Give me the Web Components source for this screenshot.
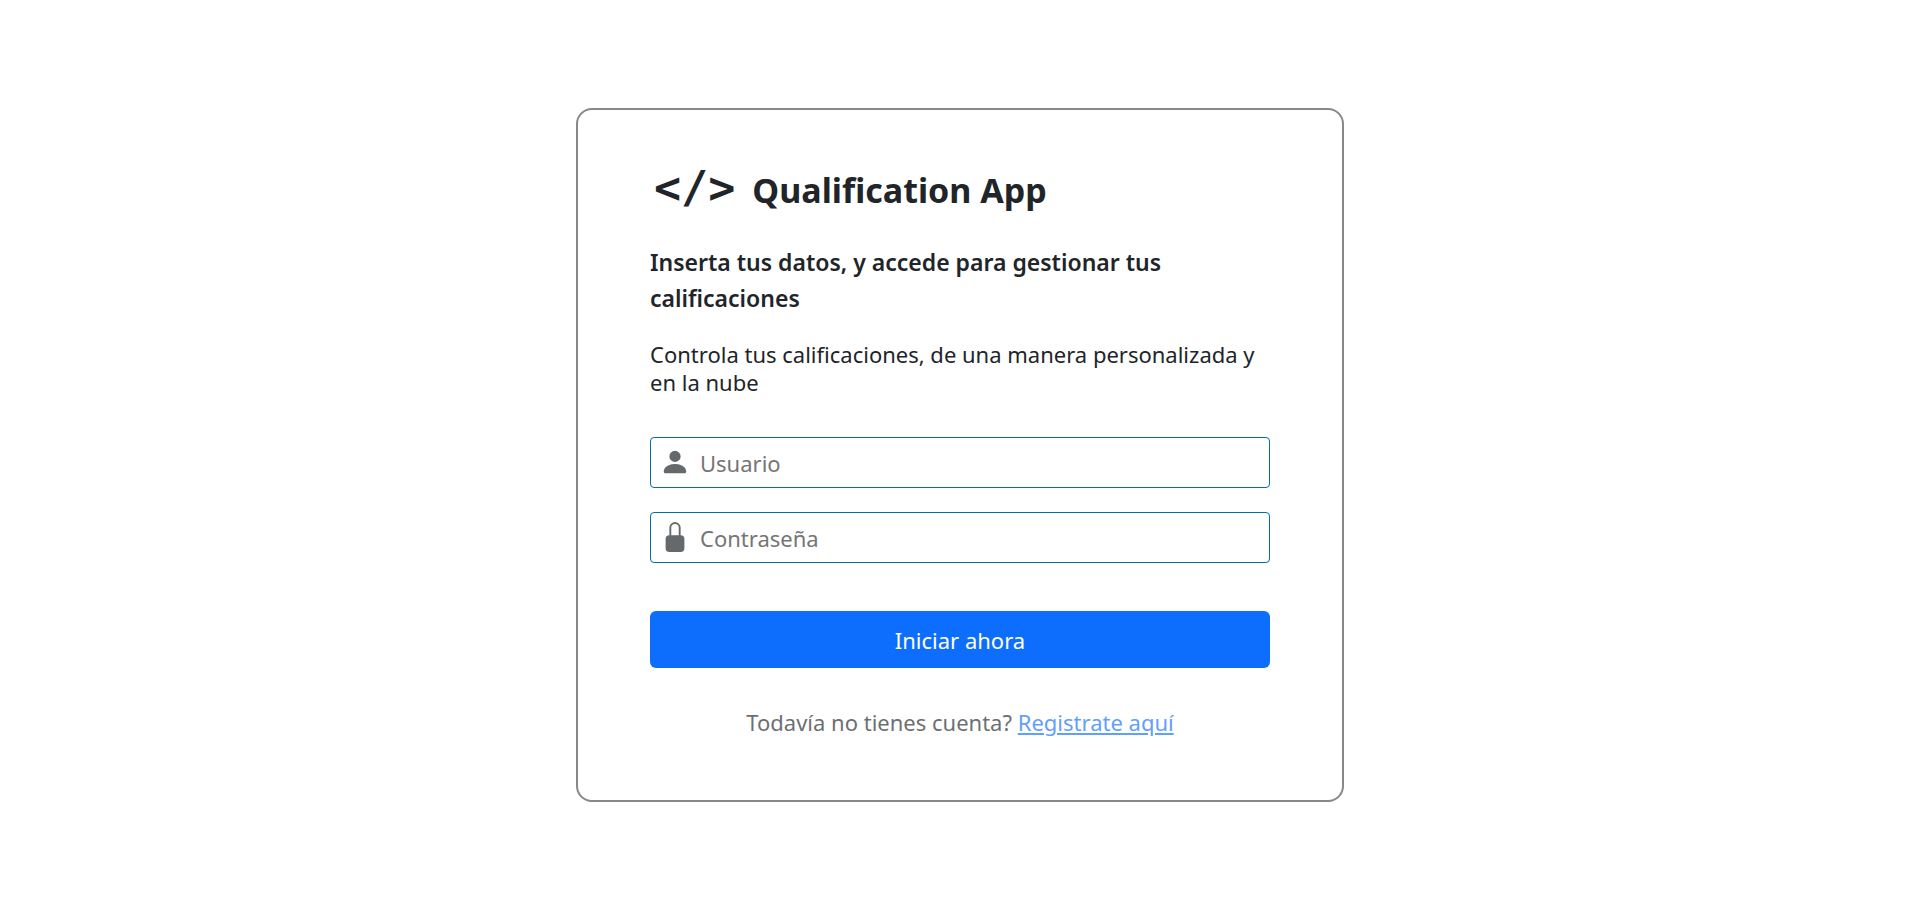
<!DOCTYPE html>
<html lang="es">
<head>
<meta charset="utf-8">
<meta name="viewport" content="width=device-width, initial-scale=1">
<title>Qualification App</title>
<style>
  body { margin: 0; background: #fff; color: #212529; font: 400 22px/28px "Noto Sans", "Open Sans", sans-serif; }
</style>
</head>
<body>
<login-page></login-page>

<template id="login-page">
  <style>
    :host { display: block; }
    main { box-sizing: border-box; min-height: 100vh; padding-top: 4px; display: flex; align-items: center; justify-content: center; }
    form { display: block; margin: 41px 0 0; }
    .fields { display: grid; gap: 24px; margin-bottom: 48px; }
    .intro { margin: 24px 0 0; }
    h2 { margin: 22px 0 0; font-size: 23px; line-height: 36px; font-weight: 600; }
    .register { margin: 36px 0 0; line-height: 36px; text-align: center; opacity: .66; }
    a { color: #0d6efd; }
  </style>
  <main>
    <login-card>
      <app-brand>Qualification App</app-brand>
      <h2>Inserta tus datos, y accede para gestionar tus calificaciones</h2>
      <p class="intro">Controla tus calificaciones, de una manera personalizada y en la nube</p>
      <form>
        <div class="fields">
          <icon-field type="text" label="Usuario">
            <svg width="30" height="30" viewBox="0 0 16 16" fill="currentColor" aria-hidden="true"><path d="M3 14s-1 0-1-1 1-4 6-4 6 3 6 4-1 1-1 1H3zm5-6a3 3 0 1 0 0-6 3 3 0 0 0 0 6z"/></svg>
          </icon-field>
          <icon-field type="password" label="Contraseña">
            <svg width="30" height="30" viewBox="0 0 16 16" fill="currentColor" aria-hidden="true"><path d="M8 1a2 2 0 0 1 2 2v4H6V3a2 2 0 0 1 2-2zm3 6V3a3 3 0 0 0-6 0v4a2 2 0 0 0-2 2v5a2 2 0 0 0 2 2h6a2 2 0 0 0 2-2V9a2 2 0 0 0-2-2z"/></svg>
          </icon-field>
        </div>
        <submit-button>Iniciar ahora</submit-button>
      </form>
      <p class="register">Todavía no tienes cuenta? <a href="#registro">Registrate aquí</a></p>
    </login-card>
  </main>
</template>

<template id="login-card">
  <style>
    :host { display: block; box-sizing: border-box; width: 40%; min-width: 360px; padding: 48px 72px 60px; border: 2px solid #888; border-radius: 16px; }
  </style>
  <slot></slot>
</template>

<template id="app-brand">
  <style>
    :host { display: block; }
    h1 { display: flex; align-items: flex-start; gap: 17px; margin: 0; padding-left: 4px; font-size: 34px; line-height: 64px; font-weight: 700; }
    .logo { font: 700 45px/60px "DejaVu Sans Mono", monospace; }
  </style>
  <h1><span class="logo">&lt;/&gt;</span><slot></slot></h1>
</template>

<template id="icon-field">
  <style>
    :host { display: block; }
    label { display: flex; align-items: center; gap: 10px; box-sizing: border-box; height: 51px; padding: 0 9px; border: 1px solid #006fa3; border-radius: 4px; color: #66696c; }
    ::slotted(svg) { display: block; flex: none; margin-bottom: 2px; }
    input { flex: 1; min-width: 0; padding: 0; border: 0; outline: 0; background: none; font: inherit; line-height: 36px; color: #212529; }
    input::placeholder { color: #757575; opacity: 1; }
  </style>
  <label><slot></slot><input></label>
</template>

<template id="submit-button">
  <style>
    :host { display: block; }
    button { display: block; width: 100%; height: 57px; padding: 0; border: 0; border-radius: 6px; background: #0d6efd; color: #fff; font: inherit; cursor: pointer; }
  </style>
  <button type="button"><slot></slot></button>
</template>

<script>
  class TemplateElement extends HTMLElement {
    connectedCallback() {
      if (this.shadowRoot) return;
      const root = this.attachShadow({ mode: "open" });
      root.append(document.getElementById(this.localName).content.cloneNode(true));
      this.ready(root);
    }
    ready() {}
  }

  class IconField extends TemplateElement {
    ready(root) {
      const input = root.querySelector("input");
      input.type = this.getAttribute("type");
      input.placeholder = this.getAttribute("label");
      input.setAttribute("aria-label", this.getAttribute("label"));
    }
  }

  customElements.define("login-card", class extends TemplateElement {});
  customElements.define("app-brand", class extends TemplateElement {});
  customElements.define("icon-field", IconField);
  customElements.define("submit-button", class extends TemplateElement {});
  customElements.define("login-page", class extends TemplateElement {});
</script>
</body>
</html>
